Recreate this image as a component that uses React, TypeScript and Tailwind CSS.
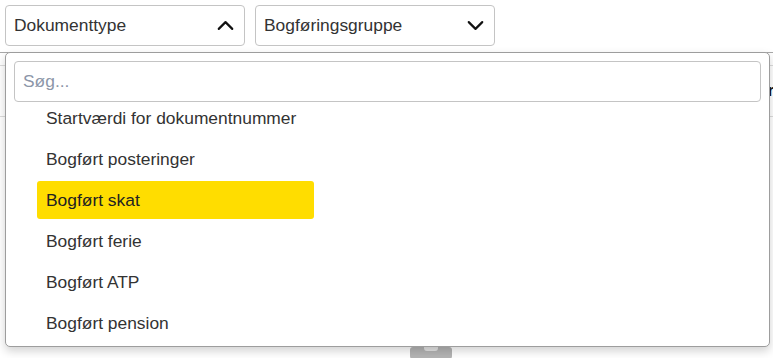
import { ChevronDown, ChevronUp } from "lucide-react";

const options = [
    "Startværdi for dokumentnummer",
    "Bogført posteringer",
    "Bogført skat",
    "Bogført ferie",
    "Bogført ATP",
    "Bogført pension",
]

function SelectButton({ label, open }: { label: string, open?: boolean }) {
    return (
        <button className="w-[240px] h-[41px] flex items-center justify-between pl-[8px] pr-[5px] border border-[#c4c4c4] rounded-[4px] bg-white text-[17.4px] text-[#333]">
            <span>{label}</span>
            {open
                ? <ChevronUp className="w-[27px] h-[27px] text-[#111]" strokeWidth={1.9} />
                : <ChevronDown className="w-[27px] h-[27px] text-[#111]" strokeWidth={1.9} />}
        </button>
    )
}

export default function App() {
    const selected = "Bogført skat"

    return (
        <div className="relative w-[773px] h-[358px] overflow-hidden bg-white font-['Liberation_Sans',Arial,sans-serif]">
            <div className="flex gap-[10px] px-[5px] pt-[5px] h-[53px] border-b border-[#a8a8a8]">
                <SelectButton label="Dokumenttype" open />
                <SelectButton label="Bogføringsgruppe" />
            </div>

            <div className="mt-[12px] h-[52px] border-y border-[#dcdcdc] flex items-center justify-end">
                <span className="font-bold text-[16px] text-[#111] mr-[-1px]">Nr</span>
            </div>

            <div className="mt-[230px] ml-[410px] w-[42px] h-[12px] bg-[#b4b4b4] rounded-[3px] flex justify-center">
                <div className="w-[14px] h-[4px] bg-[#e4e4e4] rounded-b-[3px]"></div>
            </div>

            {/* dropdown panel */}
            <div className="absolute left-[5px] top-[52px] w-[765px] h-[295px] bg-white border border-[#9d9d9d] rounded-[5px] shadow-[0_4px_10px_rgba(0,0,0,0.18)] px-[8px] pt-[8px]">
                <input
                    type="text"
                    placeholder="Søg..."
                    className="w-full h-[41px] px-[8px] border border-[#c4c4c4] rounded-[4px] text-[17.4px] text-[#333] placeholder:text-[#8c96a8] focus:outline-none"
                />
                <ul className="mt-[-6px] pl-[23px]">
                    {options.map((o) => (
                        <li
                            key={o}
                            className={`w-[277px] h-[38px] my-[3px] px-[9px] flex items-center rounded-[3px] text-[17.4px] whitespace-nowrap ${o === selected ? "bg-[#ffdd00] text-[#222]" : "text-[#333]"}`}
                        >
                            {o}
                        </li>
                    ))}
                </ul>
            </div>
        </div>
    )
}
